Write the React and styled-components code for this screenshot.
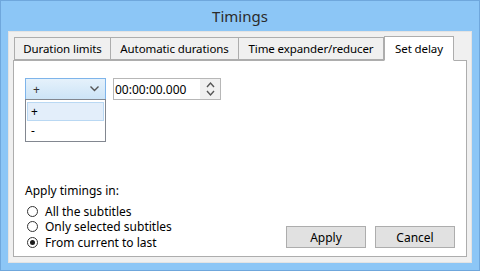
import React from "react";
import styled, { createGlobalStyle } from "styled-components";

const GlobalStyle = createGlobalStyle`
  html, body {
    margin: 0;
    padding: 0;
    background: #8cc6f6;
  }
  body {
    font-family: "Noto Sans", "Open Sans", sans-serif;
    font-size: 12px;
    color: #000;
  }
`;

const Window = styled.div`
  width: 480px;
  height: 271px;
  box-sizing: border-box;
  background: #8cc6f6;
  border: 1px solid #6fa7dc;
  display: flex;
  flex-direction: column;
`;

const TitleBar = styled.div`
  height: 30px;
  display: flex;
  align-items: center;
  justify-content: center;
  font-size: 15px;
  color: #2b2b2b;
  padding-bottom: 1px;
  box-sizing: border-box;
`;

const Client = styled.div`
  margin: 0 7px 7px 7px;
  flex: 1;
  background: #f0f0f0;
  border: 1px solid #e3e3e3;
  padding: 4px 4px 5px 4px;
  display: flex;
  flex-direction: column;
`;

const TabStrip = styled.div`
  display: flex;
  align-items: flex-end;
  height: 24px;
  padding-left: 1px;
  position: relative;
  z-index: 1;
`;

const Tab = styled.div`
  width: ${(p) => p.$w}px;
  height: ${(p) => (p.$active ? "25px" : "23px")};
  box-sizing: border-box;
  display: flex;
  align-items: center;
  justify-content: center;
  background: ${(p) => (p.$active ? "#fff" : "#f0f0f0")};
  border: 1px solid #adadad;
  border-left-width: ${(p) => (p.$first || p.$active ? "1px" : "0")};
  border-bottom: ${(p) => (p.$active ? "1px solid #fff" : "1px solid #adadad")};
  margin-bottom: ${(p) => (p.$active ? "-1px" : "0")};
  font-size: 11.5px;
  letter-spacing: -0.1px;
  white-space: nowrap;
`;

const TabPage = styled.div`
  flex: 1;
  background: #fff;
  border: 1px solid #adadad;
  padding: 17px 11px 6px 11px;
  display: flex;
  flex-direction: column;
  justify-content: space-between;
`;

const TopRow = styled.div`
  display: flex;
  gap: 7px;
`;

const ComboWrap = styled.div`
  position: relative;
  width: 81px;
`;

const Combo = styled.div`
  height: 22px;
  box-sizing: border-box;
  border: 1px solid #7eb4ea;
  background: linear-gradient(#e5f1fb, #cce4f7);
  display: flex;
  align-items: center;
  justify-content: space-between;
  padding: 0 6px 0 7px;
  color: #333;
`;

const DropList = styled.div`
  position: absolute;
  top: 21px;
  left: 0;
  width: 81px;
  height: 43px;
  box-sizing: border-box;
  border: 1px solid #828790;
  background: #fff;
  padding: 2px 1px;
`;

const DropItem = styled.div`
  height: 19px;
  box-sizing: border-box;
  display: flex;
  align-items: center;
  padding-left: 3px;
  border: 1px solid ${(p) => (p.$hover ? "#b9d8f3" : "transparent")};
  background: ${(p) => (p.$hover ? "#e3eefa" : "transparent")};
`;

const TimeField = styled.div`
  width: 108px;
  height: 22px;
  box-sizing: border-box;
  border: 1px solid #b7b7b7;
  display: flex;
  align-items: center;
  justify-content: space-between;
  padding-left: 1px;
  font-size: 12px;
`;

const Spinner = styled.div`
  width: 20px;
  height: 20px;
  background: #f0f0f0;
  display: flex;
  align-items: center;
  justify-content: center;
`;

const BottomRow = styled.div`
  display: flex;
  justify-content: space-between;
  align-items: flex-end;
`;

const Options = styled.div`
  display: flex;
  flex-direction: column;
`;

const Label = styled.div`
  margin-bottom: 5px;
  line-height: 16px;
`;

const RadioRow = styled.label`
  display: flex;
  align-items: center;
  gap: 7px;
  height: 15.5px;
  padding-left: 2px;
`;

const RadioCircle = styled.span`
  width: 11px;
  height: 11px;
  box-sizing: border-box;
  border-radius: 50%;
  border: 1px solid #333;
  background: #fff;
  display: flex;
  align-items: center;
  justify-content: center;
  &::after {
    content: "";
    width: 5px;
    height: 5px;
    border-radius: 50%;
    background: ${(p) => (p.$checked ? "#1a1a1a" : "transparent")};
  }
`;

const Buttons = styled.div`
  display: flex;
  gap: 9px;
  margin-bottom: 2px;
`;

const Button = styled.button`
  width: 80px;
  height: 22px;
  box-sizing: border-box;
  border: 1px solid #adadad;
  background: #e1e1e1;
  font-family: inherit;
  font-size: 12px;
  color: #000;
  padding: 0;
`;

const Chevron = () => (
  <svg width="9" height="6" viewBox="0 0 9 6">
    <path d="M0.5 0.5 L4.5 4.5 L8.5 0.5" fill="none" stroke="#555" strokeWidth="1.4" />
  </svg>
);

const SpinArrows = () => (
  <svg width="9" height="16" viewBox="0 0 9 16">
    <path d="M1 6 L4.5 2 L8 6" fill="none" stroke="#555" strokeWidth="1.4" />
    <path d="M1 10 L4.5 14 L8 10" fill="none" stroke="#555" strokeWidth="1.4" />
  </svg>
);

const tabs = [
  { text: "Duration limits", w: 97 },
  { text: "Automatic durations", w: 128 },
  { text: "Time expander/reducer", w: 145 },
  { text: "Set delay", w: 70 },
];
const options = [
  { text: "All the subtitles", checked: false },
  { text: "Only selected subtitles", checked: false },
  { text: "From current to last", checked: true },
];

export default function App() {
  return (
    <>
      <GlobalStyle />
      <Window>
        <TitleBar>Timings</TitleBar>
        <Client>
          <TabStrip>
            {tabs.map((t, i) => (
              <Tab key={t.text} $w={t.w} $first={i === 0} $active={i === tabs.length - 1}>
                {t.text}
              </Tab>
            ))}
          </TabStrip>
          <TabPage>
            <TopRow>
              <ComboWrap>
                <Combo>
                  <span>+</span>
                  <Chevron />
                </Combo>
                <DropList>
                  <DropItem $hover>+</DropItem>
                  <DropItem>-</DropItem>
                </DropList>
              </ComboWrap>
              <TimeField>
                <span>00:00:00.000</span>
                <Spinner>
                  <SpinArrows />
                </Spinner>
              </TimeField>
            </TopRow>
            <BottomRow>
              <Options>
                <Label>Apply timings in:</Label>
                {options.map((o) => (
                  <RadioRow key={o.text}>
                    <RadioCircle $checked={o.checked} />
                    {o.text}
                  </RadioRow>
                ))}
              </Options>
              <Buttons>
                <Button>Apply</Button>
                <Button>Cancel</Button>
              </Buttons>
            </BottomRow>
          </TabPage>
        </Client>
      </Window>
    </>
  );
}
